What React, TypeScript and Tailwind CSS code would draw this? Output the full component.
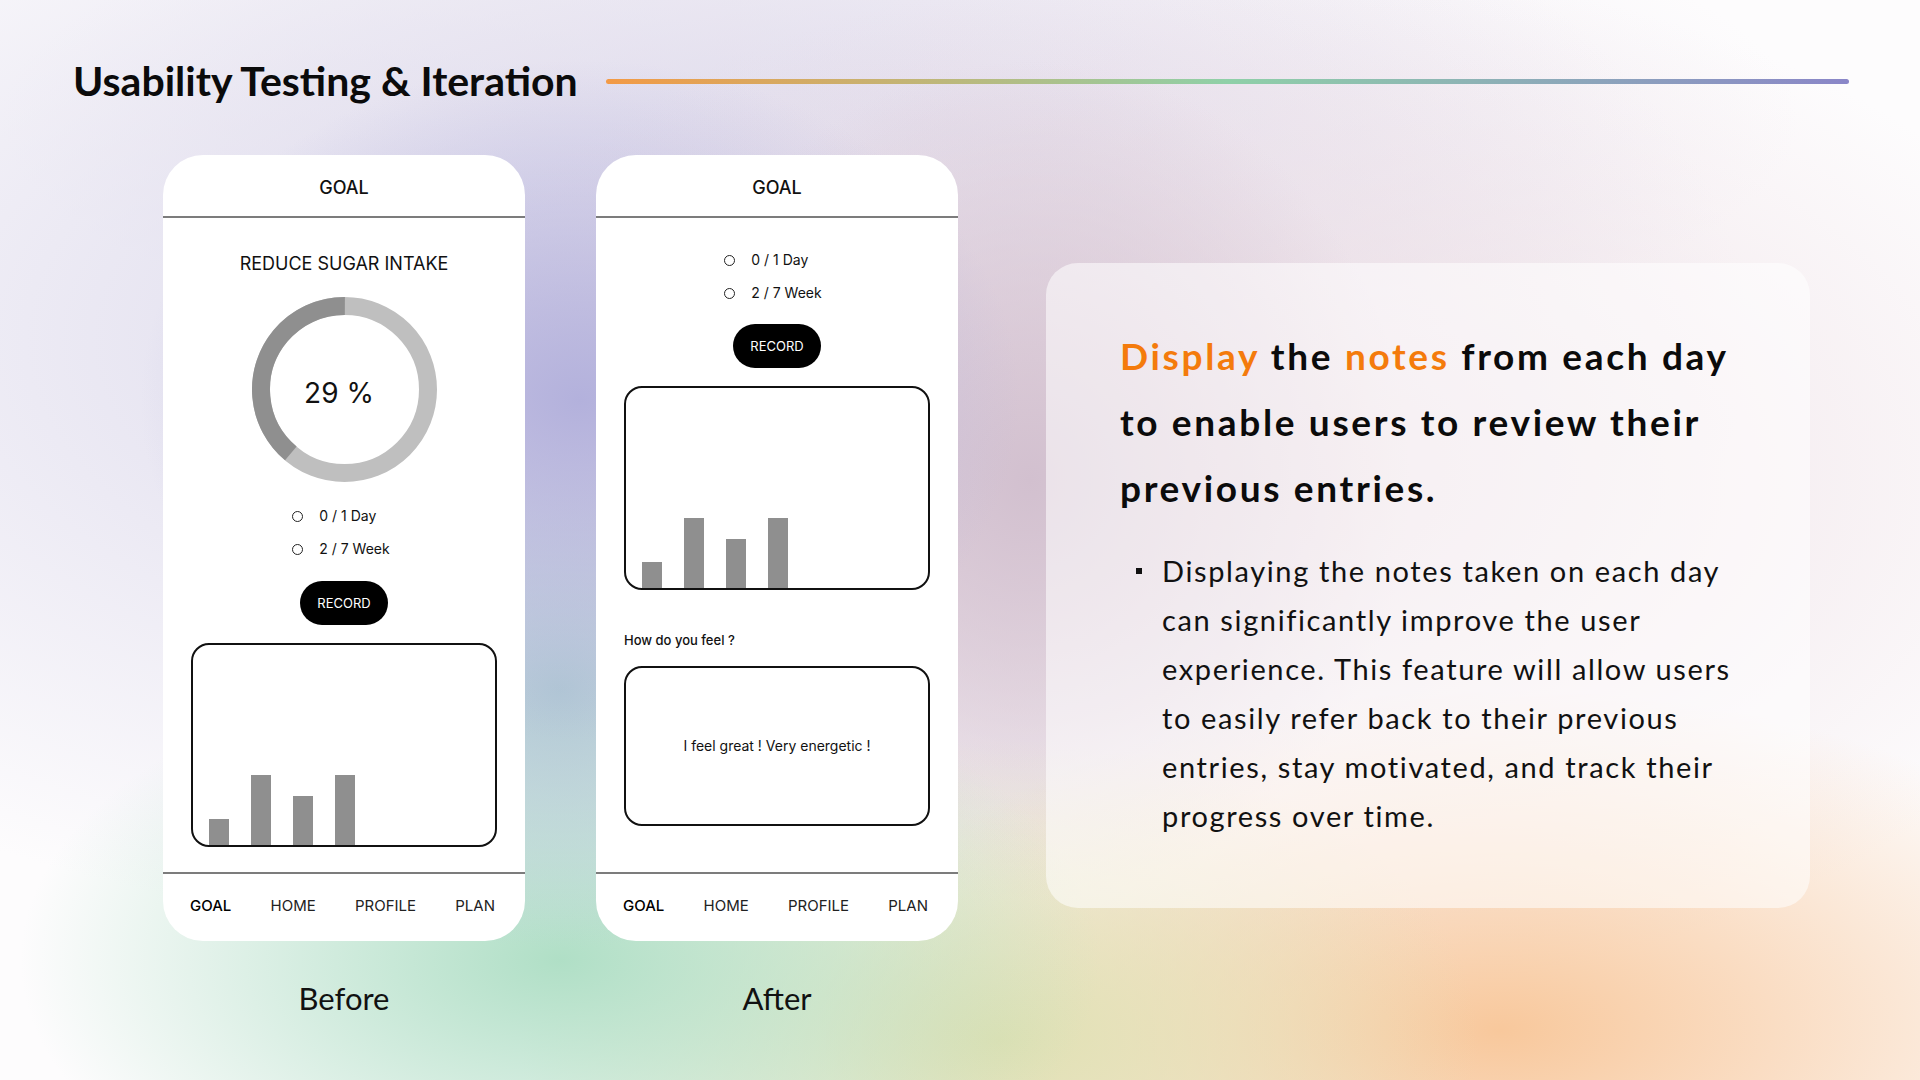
import React from "react";

const ui = "font-['Inter',_'Liberation_Sans',_sans-serif]";
const disp = "font-['Lato',_'Liberation_Sans',_sans-serif]";

function Radio({ label }: { label: string }) {
  return (
    <div className="flex items-center h-[20px]">
      <span className="w-[11px] h-[11px] rounded-full border-[1.5px] border-[#222] box-border" />
      <span className="ml-[16px] text-[14px] leading-[20px] text-[#111]">{label}</span>
    </div>
  );
}

function RecordButton() {
  return (
    <div className="w-[88px] h-[44px] rounded-full bg-black flex items-center justify-center">
      <span className="text-white text-[13px] leading-none">RECORD</span>
    </div>
  );
}

function Chart() {
  const bars = [26, 70, 49, 70];
  return (
    <div className="w-[306px] h-[204px] rounded-[18px] border-2 border-[#111] box-border flex items-end gap-[22px] pl-[16px] overflow-hidden">
      {bars.map((h, i) => (
        <div key={i} className="w-[20px] bg-[#8f8f8f]" style={{ height: h }} />
      ))}
    </div>
  );
}

function Donut() {
  const r = 83.5;
  const c = 2 * Math.PI * r;
  const dark = (140 / 360) * c;
  return (
    <div className="relative w-[185px] h-[185px]">
      <svg width="185" height="185" viewBox="0 0 185 185">
        <circle cx="92.5" cy="92.5" r={r} fill="none" stroke="#bfbfbf" strokeWidth="18" />
        <circle
          cx="92.5"
          cy="92.5"
          r={r}
          fill="none"
          stroke="#8f8f8f"
          strokeWidth="18"
          strokeDasharray={`${dark} ${c}`}
          transform="rotate(130 92.5 92.5)"
        />
      </svg>
      <div className="absolute inset-0 flex items-center justify-center pr-[10px] pt-[6px]">
        <span className="text-[28px] leading-none text-[#111]">29 %</span>
      </div>
    </div>
  );
}

function Nav() {
  return (
    <div className="h-[69px] border-t-2 border-[#7c7c7c] flex items-center justify-between pl-[27px] pr-[30px] pb-[4px] text-[15px] leading-none">
      <span className="font-medium text-black">GOAL</span>
      <span className="text-[#222]">HOME</span>
      <span className="text-[#222]">PROFILE</span>
      <span className="text-[#222]">PLAN</span>
    </div>
  );
}

function Phone({ children, label }: { children: React.ReactNode; label: string }) {
  return (
    <div className="flex flex-col items-center">
      <div className={`w-[362px] h-[786px] bg-white rounded-[40px] flex flex-col overflow-hidden ${ui}`}>
        <div className="h-[63px] border-b-2 border-[#7c7c7c] flex items-center justify-center pt-[4px] box-border">
          <span className="text-[18px] leading-none font-medium text-[#111]">GOAL</span>
        </div>
        <div className="flex-1 flex flex-col items-center">{children}</div>
        <Nav />
      </div>
      <div className={`mt-[39px] text-[31px] leading-[36px] text-[#111] ${disp}`}>{label}</div>
    </div>
  );
}

export default function App() {
  return (
    <div className="w-[1920px] h-[1080px] overflow-hidden bg-[#fdfcfd] [background-image:radial-gradient(440px_340px_at_580px_400px,#b3b1dc,transparent),radial-gradient(320px_260px_at_560px_690px,#b0c8d4,transparent),radial-gradient(540px_300px_at_560px_960px,#b0dfc6,transparent),radial-gradient(480px_300px_at_1000px_1040px,#dfe0b2,transparent),radial-gradient(680px_340px_at_1500px_1030px,#f8c89c,transparent),radial-gradient(380px_420px_at_1030px_480px,#d2c0cf,transparent),radial-gradient(900px_520px_at_1250px_480px,#ecdce2,transparent),radial-gradient(1150px_600px_at_600px_340px,#dbd8eb,transparent),radial-gradient(900px_260px_at_900px_120px,#ece6f0,transparent)]">
      <div className="flex flex-col">
        <div className="h-[40px] mt-[61px] flex items-center pl-[73px]">
          <h1 className={`text-[41px] leading-[40px] font-bold text-[#0b0b0b] whitespace-nowrap ${disp}`}>
            Usability Testing &amp; Iteration
          </h1>
          <div className="flex-1 h-[5px] ml-[28px] mr-[71px] rounded-full bg-[linear-gradient(90deg,#f39a45,#8fd0a8_50%,#8a86c8)]" />
        </div>

        <div className="flex items-start mt-[54px] pl-[163px]">
          <Phone label="Before">
            <div className="mt-[34px] text-[18px] leading-[24px] text-[#111]">REDUCE SUGAR INTAKE</div>
            <div className="mt-[21px]">
              <Donut />
            </div>
            <div className="mt-[24px] flex flex-col items-start gap-[13px] pr-[6px]">
              <Radio label="0 / 1 Day" />
              <Radio label="2 / 7 Week" />
            </div>
            <div className="mt-[22px]">
              <RecordButton />
            </div>
            <div className="mt-[18px]">
              <Chart />
            </div>
          </Phone>

          <div className="ml-[71px]">
            <Phone label="After">
              <div className="mt-[32px] flex flex-col items-start gap-[13px] pr-[8px]">
                <Radio label="0 / 1 Day" />
                <Radio label="2 / 7 Week" />
              </div>
              <div className="mt-[21px]">
                <RecordButton />
              </div>
              <div className="mt-[18px]">
                <Chart />
              </div>
              <div className="mt-[41px] w-[306px] text-[13px] leading-[18px] font-medium text-[#111]">How do you feel ?</div>
              <div className="mt-[17px] w-[306px] h-[160px] rounded-[18px] border-2 border-[#111] box-border flex items-center justify-center">
                <span className="text-[14px] leading-none text-[#111]">I feel great ! Very energetic !</span>
              </div>
            </Phone>
          </div>

          <div className={`ml-[88px] mt-[108px] w-[764px] h-[645px] rounded-[32px] bg-[rgba(255,255,255,0.55)] pt-[60px] pl-[74px] ${disp}`}>
            <div className="text-[37px] leading-[66px] font-bold text-[#0b0b0b] tracking-[0.072em] whitespace-nowrap">
              <span className="text-[#f47b0c]">Display</span> the <span className="text-[#f47b0c]">notes</span> from each day
              <br />
              to enable users to review their
              <br />
              previous entries.
            </div>
            <div className="mt-[25px] ml-[16px] flex items-start">
              <div className="w-[6px] h-[49px] flex items-center">
                <span className="w-[6px] h-[6px] bg-[#111]" />
              </div>
              <div className="ml-[20px] text-[29px] leading-[49px] text-[#111] tracking-[0.056em] whitespace-nowrap">
                Displaying the notes taken on each day
                <br />
                can significantly improve the user
                <br />
                experience. This feature will allow users
                <br />
                to easily refer back to their previous
                <br />
                entries, stay motivated, and track their
                <br />
                progress over time.
              </div>
            </div>
          </div>
        </div>
      </div>
    </div>
  );
}
